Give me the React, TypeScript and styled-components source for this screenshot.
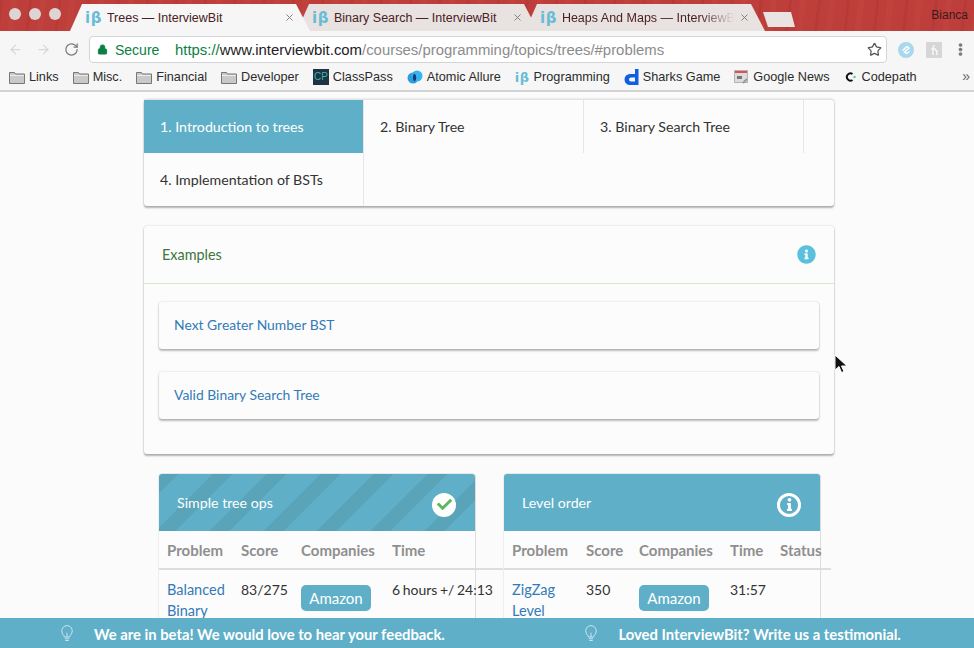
import React from 'react';
import styled, { createGlobalStyle } from 'styled-components';
import { ArrowLeft, ArrowRight, RotateCw, Star, Lock, X } from 'lucide-react';
import { FaCheck, FaInfo, FaInfoCircle, FaEllipsisV } from 'react-icons/fa';

const GlobalStyle = createGlobalStyle`
  html, body {
    margin: 0;
    padding: 0;
    background: #fbfbfb;
  }
  * { box-sizing: border-box; }
`;

const Page = styled.div`
  width: 974px;
  height: 648px;
  display: flex;
  flex-direction: column;
  overflow: hidden;
  position: relative;
  font-family: 'Lato', 'Liberation Sans', sans-serif;
`;

const TabStrip = styled.div`
  height: 31px;
  flex: none;
  display: flex;
  align-items: flex-end;
  padding-left: 70px;
  position: relative;
  background:
    repeating-linear-gradient(97deg, rgba(90, 10, 10, 0.07) 0 3px, transparent 3px 11px, rgba(255, 170, 150, 0.04) 11px 17px, transparent 17px 29px),
    #bd3e3a;
`;

const Lights = styled.div`
  position: absolute;
  left: 9px;
  top: 8px;
  display: flex;
  gap: 8px;
`;

const Light = styled.span`
  width: 12px;
  height: 12px;
  border-radius: 50%;
  background: #dcd5d3;
`;

const Tab = styled.div<{ $active?: boolean; $width: number }>`
  width: ${p => p.$width}px;
  flex: none;
  height: 27px;
  margin-right: -13px;
  padding: 0 15px 0 15px;
  display: flex;
  align-items: center;
  gap: 5px;
  font-family: 'Liberation Sans', sans-serif;
  font-size: 12.5px;
  color: #4a2024;
  background: ${p => (p.$active ? '#f6f6f6' : '#e8e2e1')};
  clip-path: polygon(0 100%, 12px 0, calc(100% - 14px) 0, 100% 100%);
  z-index: ${p => (p.$active ? 2 : 1)};
`;

const TabTitle = styled.span<{ $fade?: boolean }>`
  flex: 1;
  min-width: 0;
  white-space: nowrap;
  overflow: hidden;
  mask-image: ${p => (p.$fade ? 'linear-gradient(90deg, #000 80%, transparent)' : 'none')};
`;

const TabClose = styled(X)`
  flex: none;
  color: #807878;
`;

const Logo = styled.span<{ $size?: number }>`
  flex: none;
  font-family: 'DejaVu Sans', sans-serif;
  font-weight: 700;
  font-size: ${p => p.$size ?? 15}px;
  letter-spacing: 0.5px;
  color: #69bcd6;
`;

const NewTab = styled.div`
  width: 32px;
  height: 15px;
  flex: none;
  margin-left: 11px;
  margin-bottom: 4px;
  background: #e9e3e2;
  clip-path: polygon(0 0, 28px 0, 100% 100%, 5px 100%);
`;

const UserName = styled.span`
  position: absolute;
  right: 6px;
  top: 8px;
  font-family: 'Liberation Sans', sans-serif;
  font-size: 12px;
  color: #3b1a1c;
`;

const Toolbar = styled.div`
  height: 33px;
  flex: none;
  display: flex;
  align-items: center;
  background: #f6f6f6;
  padding: 4px 0 0 8px;
`;

const NavButtons = styled.div`
  width: 81px;
  flex: none;
  display: flex;
  gap: 13px;
  align-items: center;
`;

const Omnibox = styled.div`
  width: 798px;
  height: 27px;
  flex: none;
  padding: 0 4px 0 7px;
  display: flex;
  align-items: center;
  background: #fff;
  border: 1px solid #d4d4d4;
  border-radius: 4px;
  font-family: 'Liberation Sans', sans-serif;
  font-size: 14.9px;
`;

const Secure = styled.span`
  display: flex;
  align-items: center;
  gap: 7px;
  width: 78px;
  color: #0b8043;
  font-size: 14px;
`;

const UrlScheme = styled.span`
  color: #0b8043;
`;

const UrlHost = styled.span`
  color: #222;
`;

const UrlPath = styled.span`
  color: #8c8c8c;
  flex: 1;
`;

const Extensions = styled.div`
  flex: 1;
  display: flex;
  align-items: center;
  padding-left: 11px;
  gap: 12px;
  color: #7a7a7a;
`;

const BookmarkBar = styled.div`
  height: 28px;
  flex: none;
  padding-left: 9px;
  display: flex;
  align-items: center;
  gap: 14px;
  position: relative;
  background: #f6f6f6;
  border-bottom: 2px solid #d3d3d3;
  font-family: 'Liberation Sans', sans-serif;
  font-size: 12.7px;
  color: #2b2b2b;
`;

const Bookmark = styled.span`
  display: flex;
  align-items: center;
  gap: 4px;
  white-space: nowrap;
`;

const CpBadge = styled.span`
  width: 16px;
  height: 16px;
  background: #1f3344;
  color: #37b7a5;
  font-size: 10px;
  line-height: 16px;
  text-align: center;
`;

const MoreChevron = styled.span`
  position: absolute;
  right: 4px;
  top: 4px;
  color: #666;
  font-size: 14px;
`;

const Content = styled.main`
  flex: 1;
  overflow: hidden;
  padding: 7px 140px 0 144px;
  background: #fbfbfb;
`;

const Card = styled.section`
  width: 690px;
  background: #fcfcfc;
  border-radius: 3px;
  box-shadow: 0 2px 2px rgba(0, 0, 0, 0.28), 0 0 2px rgba(0, 0, 0, 0.2);
`;

const TopicGrid = styled(Card)`
  display: grid;
  grid-template-columns: 220px 220px 220px 30px;
  grid-auto-rows: 53px;
  border-top: 1px solid #e2e2e2;
  margin-bottom: 20px;
`;

const Topic = styled.div<{ $active?: boolean }>`
  display: flex;
  align-items: center;
  padding-left: 16px;
  font-size: 14.2px;
  color: ${p => (p.$active ? '#fff' : '#333')};
  background: ${p => (p.$active ? '#60afc8' : 'transparent')};
  border-right: 1px solid #e6e6e6;
`;

const TopicSpacer = styled.span``;

const ExamplesCard = styled(Card)`
  height: 228px;
  margin-bottom: 20px;
`;

const ExamplesHeader = styled.header`
  height: 58px;
  padding: 0 18px 0 18px;
  display: flex;
  align-items: center;
  justify-content: space-between;
  border-bottom: 1px solid #d6e9c6;
  font-size: 14.4px;
  color: #3c763d;
`;

const InfoIcon = styled(FaInfoCircle)`
  color: #5bc0de;
  font-size: 19px;
`;

const ExampleList = styled.div`
  display: flex;
  flex-direction: column;
  gap: 23px;
  padding: 18px 15px 0;
`;

const ExampleItem = styled.a`
  height: 47px;
  padding: 0 0 2px 15px;
  display: flex;
  align-items: center;
  background: #fcfcfc;
  border-radius: 3px;
  box-shadow: 0 2px 2px rgba(0, 0, 0, 0.25), 0 0 2px rgba(0, 0, 0, 0.2);
  font-size: 13.9px;
  color: #337ab7;
`;

const TaskRow = styled.div`
  display: flex;
  gap: 29px;
  padding-left: 15px;
`;

const TaskCard = styled.article`
  width: 316px;
  flex: none;
  border-radius: 3px;
  background: #fcfcfc;
  box-shadow: 1px 0 0 #ddd, -1px 0 0 #eee, 0 -1px 0 #e8e8e8;
`;

const TaskHeader = styled.header<{ $done?: boolean }>`
  height: 57px;
  padding: 0 19px 0 18px;
  display: flex;
  align-items: center;
  justify-content: space-between;
  border-radius: 3px 3px 0 0;
  color: #fff;
  font-size: 14.2px;
  background-color: #60afc8;
  background-image: ${p =>
    p.$done
      ? 'repeating-linear-gradient(135deg, #5aa4ba 0 14px, transparent 14px 38px)'
      : 'none'};
`;

const Badge = styled.span<{ $done?: boolean }>`
  width: 24px;
  height: 24px;
  margin-top: 4px;
  border-radius: 50%;
  display: flex;
  align-items: center;
  justify-content: center;
  font-size: ${p => (p.$done ? 15 : 13)}px;
  background: ${p => (p.$done ? '#fff' : 'transparent')};
  border: ${p => (p.$done ? 'none' : '3px solid #fff')};
  color: ${p => (p.$done ? '#5cb85c' : '#fff')};
`;

const Table = styled.div<{ $cols: string; $width: number }>`
  width: ${p => p.$width}px;
  display: grid;
  grid-template-columns: ${p => p.$cols};
  padding-left: 8px;
  font-size: 14px;
  color: #333;
`;

const HeadCell = styled.div`
  height: 39px;
  margin-left: -8px;
  padding-left: 8px;
  display: flex;
  align-items: center;
  font-size: 15px;
  font-weight: 700;
  color: #8f8f8f;
  border-bottom: 2px solid #ddd;
  white-space: nowrap;
`;

const Cell = styled.div`
  padding-top: 9px;
  line-height: 21px;
  white-space: nowrap;
  word-spacing: -1px;
`;

const ProblemLink = styled.a`
  display: block;
  font-size: 14.5px;
  color: #337ab7;
`;

const CompanyPill = styled.span`
  display: inline-block;
  width: 70px;
  height: 26px;
  margin-top: 6px;
  text-align: center;
  line-height: 27px;
  font-size: 15px;
  border-radius: 5px;
  background: #60afc8;
  color: #fff;
`;

const Banner = styled.footer`
  height: 30px;
  flex: none;
  padding: 1px 0 0 60px;
  display: flex;
  align-items: center;
  background: #60afc8;
  color: #fff;
  font-size: 14.8px;
  font-weight: 700;
`;

const BannerItem = styled.span<{ $width: number }>`
  width: ${p => p.$width}px;
  display: flex;
  align-items: center;
  gap: 20px;
  white-space: nowrap;
`;

const Cursor = styled.svg`
  position: absolute;
  left: 834px;
  top: 354px;
`;

const Folder = () => (
  <svg width="16" height="13" viewBox="0 0 16 13">
    <path d="M.5 12.5V1.5h5l1 1.5h9v9.5z" fill="#c9c9c9" stroke="#777" />
    <path d="M1 4.5h14" stroke="#eee" />
  </svg>
);

const AtomicIcon = () => (
  <svg width="16" height="14" viewBox="0 0 16 14">
    <circle cx="6" cy="8" r="5.5" fill="#2a9fe0" />
    <circle cx="10" cy="6" r="5.5" fill="#37b4ee" />
    <path d="M7 3.5c2.5 1 3 5 1 8-2.5-1-3-5-1-8z" fill="#123e7a" />
  </svg>
);

const SharksIcon = () => (
  <svg width="15" height="16" viewBox="0 0 15 16">
    <path d="M11 0h3.5v16H6a5.5 5.5 0 0 1 0-11h5zM7 8.5a2 2 0 0 0 0 4h4v-4z" fill="#0f5fe0" />
  </svg>
);

const NewsIcon = () => (
  <svg width="15" height="14" viewBox="0 0 15 14">
    <rect x="0.5" y="0.5" width="13" height="12" fill="#dcdcdc" stroke="#b5b5b5" />
    <rect x="1" y="1" width="12" height="2" fill="#d9534f" />
    <rect x="3" y="6" width="5" height="3" fill="#777" />
    <path d="M9 13l4-4" stroke="#999" strokeWidth="2" />
  </svg>
);

const CodepathIcon = () => (
  <svg width="14" height="12" viewBox="0 0 14 12">
    <path d="M8.5 3a3.6 3.6 0 1 0 0 6" fill="none" stroke="#111" strokeWidth="2" />
    <circle cx="10.5" cy="6" r="1.3" fill="#5fd0a8" />
  </svg>
);

const BookIcon = () => (
  <svg width="16" height="16" viewBox="0 0 16 16">
    <circle cx="8" cy="8" r="8" fill="#a8d8ee" />
    <path d="M4.5 8.5L9 4.5l2 1.5-4.5 4 2 1.5 3-2" fill="none" stroke="#fff" strokeWidth="1.5" />
  </svg>
);

const GreyExtension = () => (
  <svg width="16" height="16" viewBox="0 0 16 16">
    <rect width="16" height="16" rx="1" fill="#d6d6d6" />
    <path d="M5 7h5M8.5 3.5C7 3.5 7 5 7 6.5V13M9 8c2 0 2 1 2 5" stroke="#fff" strokeWidth="1.2" fill="none" />
  </svg>
);

const Bulb = () => (
  <svg width="14" height="19" viewBox="0 0 16 20" fill="none" stroke="#d4ecf3" strokeWidth="1">
    <path d="M5 14c0-2-3-3-3-7a6 6 0 0 1 12 0c0 4-3 5-3 7z" />
    <path d="M5.5 16h5M6 18h4M8 14V9" />
  </svg>
);

const bookmarks: [React.ReactNode, string][] = [
  [<Folder />, 'Links'],
  [<Folder />, 'Misc.'],
  [<Folder />, 'Financial'],
  [<Folder />, 'Developer'],
  [<CpBadge>CP</CpBadge>, 'ClassPass'],
  [<AtomicIcon />, 'Atomic Allure'],
  [<Logo $size={13}>iβ</Logo>, 'Programming'],
  [<SharksIcon />, 'Sharks Game'],
  [<NewsIcon />, 'Google News'],
  [<CodepathIcon />, 'Codepath'],
];

const topics = ['1. Introduction to trees', '2. Binary Tree', '3. Binary Search Tree'];

const App: React.FC = () => (
  <Page>
    <GlobalStyle />
    <TabStrip>
      <Lights>
        <Light />
        <Light />
        <Light />
      </Lights>
      <Tab $active $width={240}>
        <Logo>iβ</Logo>
        <TabTitle>Trees — InterviewBit</TabTitle>
        <TabClose size={11} />
      </Tab>
      <Tab $width={241}>
        <Logo>iβ</Logo>
        <TabTitle>Binary Search — InterviewBit</TabTitle>
        <TabClose size={11} />
      </Tab>
      <Tab $width={240}>
        <Logo>iβ</Logo>
        <TabTitle $fade>Heaps And Maps — InterviewBit</TabTitle>
        <TabClose size={11} />
      </Tab>
      <NewTab />
      <UserName>Bianca</UserName>
    </TabStrip>

    <Toolbar>
      <NavButtons>
        <ArrowLeft size={15} color="#d8d8d8" />
        <ArrowRight size={15} color="#d8d8d8" />
        <RotateCw size={15} color="#7a7a7a" />
      </NavButtons>
      <Omnibox>
        <Secure>
          <Lock size={11} fill="#0b8043" />
          Secure
        </Secure>
        <UrlScheme>https://</UrlScheme>
        <UrlHost>www.interviewbit.com</UrlHost>
        <UrlPath>/courses/programming/topics/trees/#problems</UrlPath>
        <Star size={15} color="#555" />
      </Omnibox>
      <Extensions>
        <BookIcon />
        <GreyExtension />
        <FaEllipsisV size={13} />
      </Extensions>
    </Toolbar>

    <BookmarkBar>
      {bookmarks.map(([icon, label]) => (
        <Bookmark key={label}>
          {icon}
          {label}
        </Bookmark>
      ))}
      <MoreChevron>»</MoreChevron>
    </BookmarkBar>

    <Content>
      <TopicGrid>
        {topics.map((t, i) => (
          <Topic key={t} $active={i === 0}>
            {t}
          </Topic>
        ))}
        <TopicSpacer />
        <Topic>4. Implementation of BSTs</Topic>
      </TopicGrid>

      <ExamplesCard>
        <ExamplesHeader>
          Examples
          <InfoIcon />
        </ExamplesHeader>
        <ExampleList>
          <ExampleItem>Next Greater Number BST</ExampleItem>
          <ExampleItem>Valid Binary Search Tree</ExampleItem>
        </ExampleList>
      </ExamplesCard>

      <TaskRow>
        <TaskCard>
          <TaskHeader $done>
            Simple tree ops
            <Badge $done>
              <FaCheck />
            </Badge>
          </TaskHeader>
          <Table $cols="74px 60px 91px 1fr" $width={345}>
            <HeadCell>Problem</HeadCell>
            <HeadCell>Score</HeadCell>
            <HeadCell>Companies</HeadCell>
            <HeadCell>Time</HeadCell>
            <Cell>
              <ProblemLink>Balanced</ProblemLink>
              <ProblemLink>Binary</ProblemLink>
            </Cell>
            <Cell>83/275</Cell>
            <Cell>
              <CompanyPill>Amazon</CompanyPill>
            </Cell>
            <Cell>6 hours +/ 24:13</Cell>
          </Table>
        </TaskCard>

        <TaskCard>
          <TaskHeader>
            Level order
            <Badge>
              <FaInfo />
            </Badge>
          </TaskHeader>
          <Table $cols="74px 53px 91px 50px 1fr" $width={327}>
            <HeadCell>Problem</HeadCell>
            <HeadCell>Score</HeadCell>
            <HeadCell>Companies</HeadCell>
            <HeadCell>Time</HeadCell>
            <HeadCell>Status</HeadCell>
            <Cell>
              <ProblemLink>ZigZag</ProblemLink>
              <ProblemLink>Level</ProblemLink>
            </Cell>
            <Cell>350</Cell>
            <Cell>
              <CompanyPill>Amazon</CompanyPill>
            </Cell>
            <Cell>31:57</Cell>
            <Cell />
          </Table>
        </TaskCard>
      </TaskRow>
    </Content>

    <Banner>
      <BannerItem $width={525}>
        <Bulb />
        We are in beta! We would love to hear your feedback.
      </BannerItem>
      <BannerItem $width={390}>
        <Bulb />
        Loved InterviewBit? Write us a testimonial.
      </BannerItem>
    </Banner>

    <Cursor width="14" height="20" viewBox="0 0 14 20">
      <path d="M1 1v15l4-3.5 2.5 6 2.5-1-2.5-5.5H13z" fill="#111" stroke="#fff" strokeWidth="1" />
    </Cursor>
  </Page>
);

export default App;
